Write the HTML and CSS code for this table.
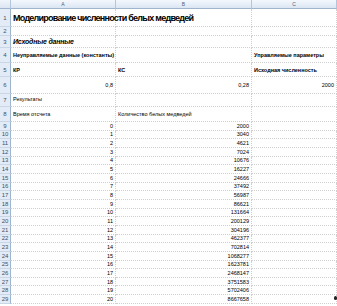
FILE: index.html
```html
<!DOCTYPE html>
<html lang="ru">
<head>
    <meta charset="UTF-8">
    <title>Моделирование численности белых медведей</title>
    <link rel="stylesheet" href="styles.css">
</head>
<body>
    <div class="sheet" id="sheet">
        <div class="corner"></div>
        <div class="col-head">A</div>
        <div class="col-head">B</div>
        <div class="col-head">C</div>

        <div class="row-head">1</div>
        <div class="cell title">Моделирование численности белых медведей</div>
        <div class="cell"></div>
        <div class="cell"></div>

        <div class="row-head">2</div>
        <div class="cell"></div>
        <div class="cell"></div>
        <div class="cell"></div>

        <div class="row-head">3</div>
        <div class="cell section">Исходные данные</div>
        <div class="cell"></div>
        <div class="cell"></div>

        <div class="row-head">4</div>
        <div class="cell bold">Неуправляемые данные (константы)</div>
        <div class="cell"></div>
        <div class="cell bold">Управляемые параметры</div>

        <div class="row-head">5</div>
        <div class="cell bold">КР</div>
        <div class="cell bold">КС</div>
        <div class="cell bold">Исходная численность</div>

        <div class="row-head">6</div>
        <div class="cell num">0,8</div>
        <div class="cell num">0,28</div>
        <div class="cell num">2000</div>

        <div class="row-head">7</div>
        <div class="cell top">Результаты</div>
        <div class="cell"></div>
        <div class="cell"></div>

        <div class="row-head">8</div>
        <div class="cell">Время отсчета</div>
        <div class="cell">Количество белых медведей</div>
        <div class="cell"></div>
        <!-- строки 9-29 добавляются скриптом -->
    </div>
    <span class="cursor-dot"></span>

    <script>
        const counts = [2000, 3040, 4621, 7024, 10676, 16227, 24666, 37492, 56987, 86621,
            131664, 200129, 304196, 462377, 702814, 1068277, 1623781, 2468147, 3751583,
            5702406, 8667658];
        const sheet = document.getElementById('sheet');
        counts.forEach((count, t) => {
            const row = `
                <div class="row-head">${t + 9}</div>
                <div class="cell num">${t}</div>
                <div class="cell num">${count}</div>
                <div class="cell"></div>
            `;
            sheet.insertAdjacentHTML('beforeend', row);
        });
    </script>
</body>
</html>
```

FILE: styles.css
```css
body {
    margin: 0;
    padding: 0;
    background-color: #fff;
    font-family: "Liberation Sans", Arial, sans-serif;
    color: #000;
    overflow: hidden;
}

.sheet {
    display: grid;
    grid-template-columns: 11px 105px 136px 85px;
    grid-template-rows: 9px 18px 9px 12px 15px 14px 17px 13px 15px repeat(21, 8.67px);
}

.corner {
    background: linear-gradient(#f1f5fb, #dbe5f1);
    border-right: 1px solid #b4c6dc;
    border-bottom: 1px solid #9fb5cd;
}

.col-head {
    background: linear-gradient(#f4f8fd, #dbe6f3);
    border-right: 1px solid #b4c6dc;
    border-bottom: 1px solid #9fb5cd;
    font-size: 5px;
    color: #50627a;
    display: flex;
    align-items: center;
    justify-content: center;
}

.row-head {
    background-color: #e3ebf6;
    border-right: 1px solid #9fb5cd;
    border-bottom: 1px solid #c9d6e6;
    font-size: 6px;
    color: #3e5068;
    display: flex;
    align-items: center;
    justify-content: center;
}

.cell {
    border-right: 1px dotted #cfcfcf;
    border-bottom: 1px dotted #cfcfcf;
    display: flex;
    align-items: center;
    padding: 0 2px;
    font-size: 5.5px;
    white-space: nowrap;
    min-width: 0;
}

.cell.num {
    justify-content: flex-end;
}

.cell.top {
    align-items: flex-start;
    padding-top: 2px;
}

.title {
    font-size: 9px;
    font-weight: bold;
    letter-spacing: -0.75px;
}

.section {
    font-size: 7px;
    font-weight: bold;
    font-style: italic;
    letter-spacing: -0.2px;
}

.bold {
    font-weight: bold;
}

.cursor-dot {
    position: absolute;
    left: 334px;
    top: 296px;
    width: 3px;
    height: 4px;
    border-radius: 2px;
    background-color: #222;
}
```
